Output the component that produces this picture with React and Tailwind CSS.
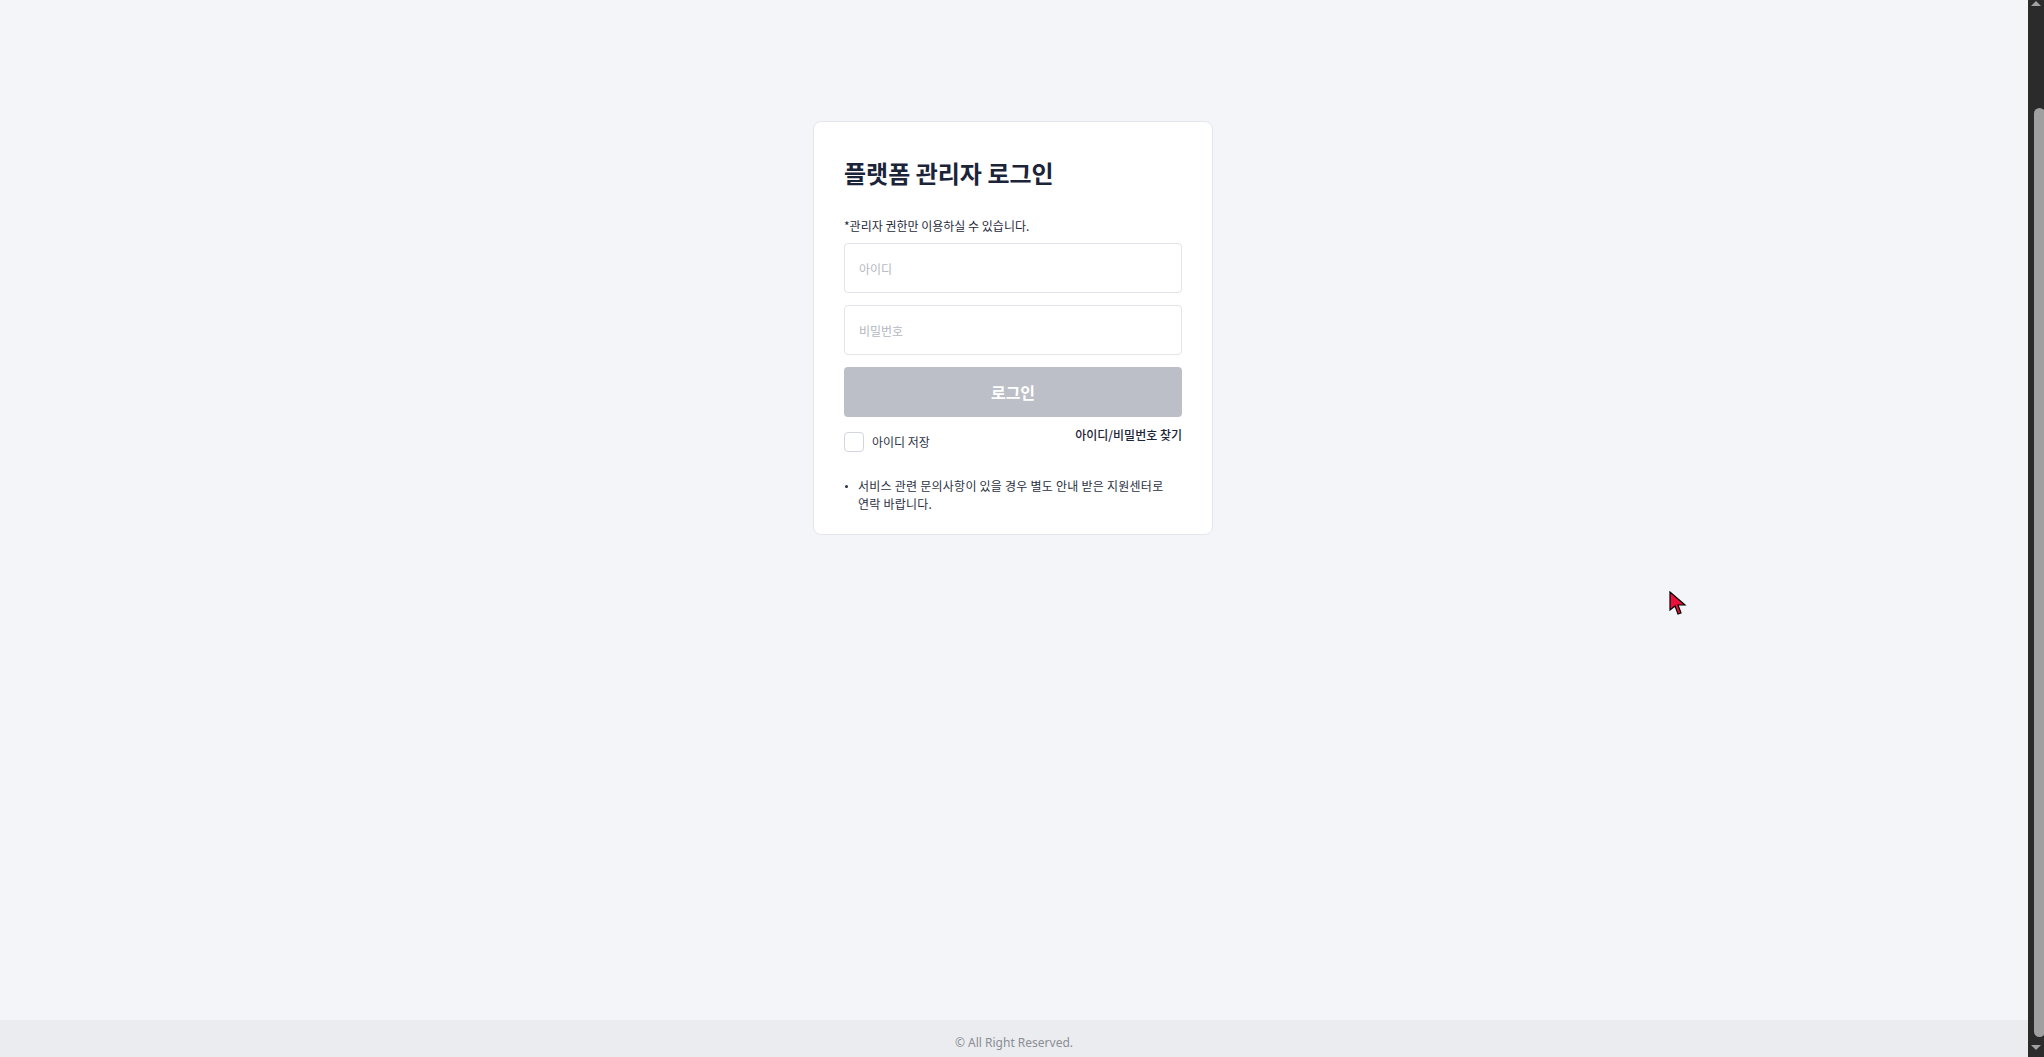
import React from "react";

function Cursor() {
  return (
    <svg className="absolute left-[1669px] top-[591px]" width="20" height="26" viewBox="0 0 20 26">
      <path d="M1 1 L1 19 L6 15 L9 23 L12 22 L9 14 L16 14 Z" fill="#e8123c" stroke="#000" strokeWidth="1.2" strokeLinejoin="miter" />
    </svg>
  );
}

export default function App() {
  return (
    <div className="relative flex h-[1057px] w-full overflow-hidden" style={{ fontFamily: '"Noto Sans CJK KR", "Noto Sans", sans-serif' }}>
      <div className="flex flex-1 flex-col bg-[#f4f5f9]">
        <div className="flex flex-1 justify-center pt-[121px] pr-[2px]">
          <div className="h-fit w-[400px] rounded-lg border border-[#e4e6eb] bg-white px-[30px] pt-[35px] pb-[21px]">
            <h1 className="text-[24px] leading-[32px] font-bold text-[#1b2438]">플랫폼 관리자 로그인</h1>
            <p className="mt-[28px] text-[12px] leading-[18px] text-[#1f2a3c]">*관리자 권한만 이용하실 수 있습니다.</p>
            <div className="mt-[8px] flex flex-col gap-[12px]">
              <input
                className="h-[50px] w-full rounded-[4px] border border-[#e2e4e9] px-[14px] text-[12px] outline-none placeholder:text-[#b3b7c0]"
                placeholder="아이디"
              />
              <input
                type="password"
                className="h-[50px] w-full rounded-[4px] border border-[#e2e4e9] px-[14px] text-[12px] outline-none placeholder:text-[#b3b7c0]"
                placeholder="비밀번호"
              />
              <button className="h-[50px] w-full rounded-[4px] bg-[#bcbfc7] text-[16px] font-bold text-white">로그인</button>
            </div>
            <div className="mt-[9px] flex items-start justify-between">
              <label className="mt-[6px] flex items-center gap-[8px]">
                <span className="h-[20px] w-[20px] rounded-[4px] border border-[#d3d6dc] bg-white" />
                <span className="text-[12px] leading-[18px] text-[#2a3142]">아이디 저장</span>
              </label>
              <a className="text-[12px] leading-[18px] font-medium text-[#1b2438]">아이디/비밀번호 찾기</a>
            </div>
            <div className="mt-[25px] flex gap-[10px] pl-[1px]">
              <span className="mt-[8px] h-[3px] w-[3px] shrink-0 rounded-full bg-[#2a3142]" />
              <p className="break-keep text-[12px] leading-[18px] tracking-[0.02em] text-[#2a3142]">
                서비스 관련 문의사항이 있을 경우 별도 안내 받은 지원센터로 연락 바랍니다.
              </p>
            </div>
          </div>
        </div>
        <footer className="flex h-[37px] items-start justify-center bg-[#ebecf0] pt-[15px] text-[12px] leading-[16px] text-[#8a8d94]" style={{ fontFamily: '"Noto Sans", sans-serif' }}>
          © All Right Reserved.
        </footer>
      </div>
      <div className="flex w-[16px] flex-col items-center bg-[#2b2b2b]">
        <div className="mt-[1px] h-0 w-0 border-x-[5px] border-b-[5px] border-x-transparent border-b-[#a3a3a3]" />
        <div className="mt-[102px] ml-[6px] h-[929px] w-[11px] rounded-t-[6px] rounded-b-[6px] bg-[#a0a0a0]" />
        <div className="mt-[8px] h-0 w-0 border-x-[5px] border-t-[5px] border-x-transparent border-t-[#a3a3a3]" />
      </div>
      <Cursor />
    </div>
  );
}
